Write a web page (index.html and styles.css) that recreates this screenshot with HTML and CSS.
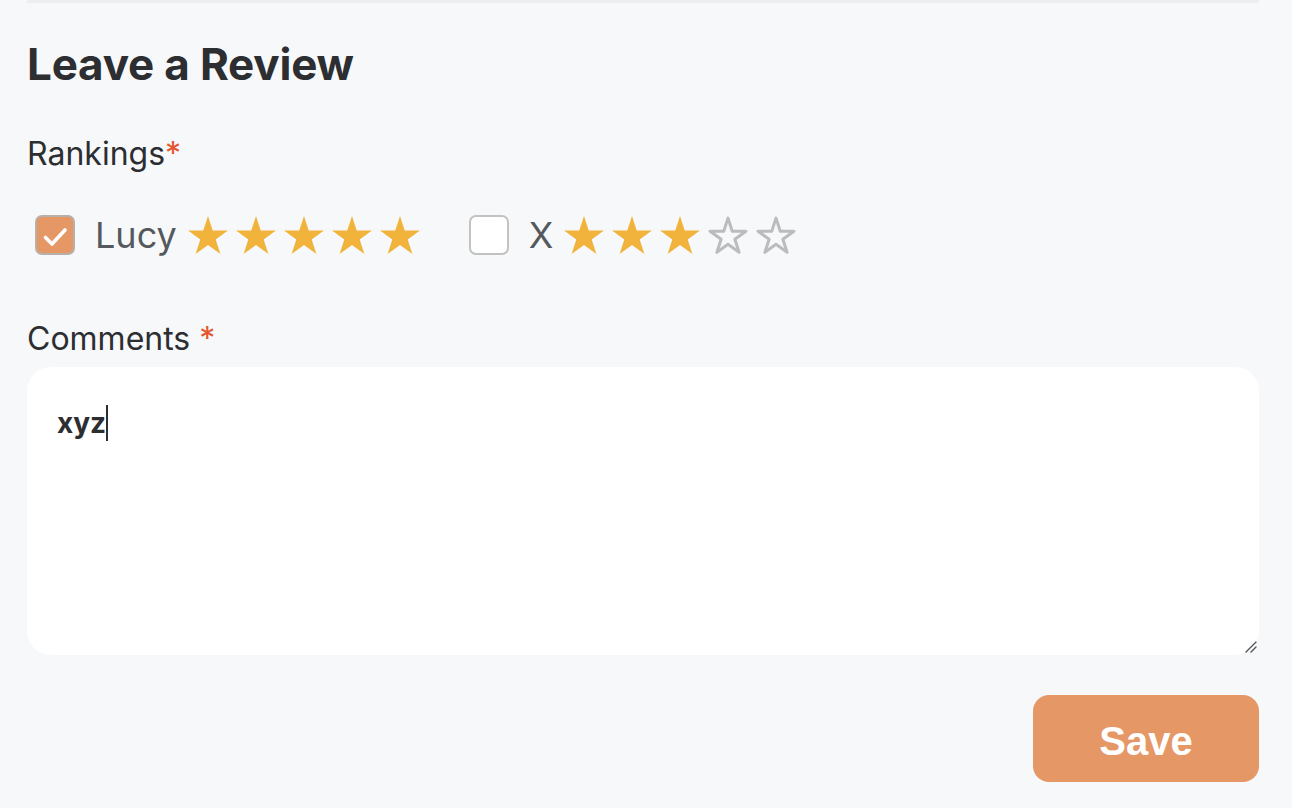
FILE: index.html
```html
<!DOCTYPE html>
<html>
<head>
<meta charset="utf-8">
<link rel="stylesheet" href="styles.css">
</head>
<body>
<div class="page">
  <div class="topbar"></div>
  <h1 class="title">Leave a Review</h1>
  <div class="label">Rankings<span class="req">*</span></div>
  <div class="rankings">
    <div class="rank">
      <span class="box checked">
        <svg viewBox="0 0 36 36" width="36" height="36"><path d="M8.5 20.5l6.5 6.5 13-14" fill="none" stroke="#fff" stroke-width="3.6" stroke-linecap="round" stroke-linejoin="round"/></svg>
      </span>
      <span class="name">Lucy</span>
      <span class="stars">
        <svg class="star" viewBox="0 0 24 24"><path class="on" d="M12 1.64L14.57 9.56L22.9 9.56L16.17 14.45L18.74 22.37L12 17.48L5.26 22.37L7.83 14.45L1.1 9.56L9.43 9.56Z"/></svg>
        <svg class="star" viewBox="0 0 24 24"><path class="on" d="M12 1.64L14.57 9.56L22.9 9.56L16.17 14.45L18.74 22.37L12 17.48L5.26 22.37L7.83 14.45L1.1 9.56L9.43 9.56Z"/></svg>
        <svg class="star" viewBox="0 0 24 24"><path class="on" d="M12 1.64L14.57 9.56L22.9 9.56L16.17 14.45L18.74 22.37L12 17.48L5.26 22.37L7.83 14.45L1.1 9.56L9.43 9.56Z"/></svg>
        <svg class="star" viewBox="0 0 24 24"><path class="on" d="M12 1.64L14.57 9.56L22.9 9.56L16.17 14.45L18.74 22.37L12 17.48L5.26 22.37L7.83 14.45L1.1 9.56L9.43 9.56Z"/></svg>
        <svg class="star" viewBox="0 0 24 24"><path class="on" d="M12 1.64L14.57 9.56L22.9 9.56L16.17 14.45L18.74 22.37L12 17.48L5.26 22.37L7.83 14.45L1.1 9.56L9.43 9.56Z"/></svg>
      </span>
    </div>
    <div class="rank">
      <span class="box"></span>
      <span class="name">X</span>
      <span class="stars">
        <svg class="star" viewBox="0 0 24 24"><path class="on" d="M12 1.64L14.57 9.56L22.9 9.56L16.17 14.45L18.74 22.37L12 17.48L5.26 22.37L7.83 14.45L1.1 9.56L9.43 9.56Z"/></svg>
        <svg class="star" viewBox="0 0 24 24"><path class="on" d="M12 1.64L14.57 9.56L22.9 9.56L16.17 14.45L18.74 22.37L12 17.48L5.26 22.37L7.83 14.45L1.1 9.56L9.43 9.56Z"/></svg>
        <svg class="star" viewBox="0 0 24 24"><path class="on" d="M12 1.64L14.57 9.56L22.9 9.56L16.17 14.45L18.74 22.37L12 17.48L5.26 22.37L7.83 14.45L1.1 9.56L9.43 9.56Z"/></svg>
        <svg class="star" viewBox="0 0 24 24"><path class="off" d="M12 2.8L14.32 9.91L21.8 9.92L15.75 14.32L18.05 21.43L12 17.04L5.95 21.43L8.25 14.32L2.2 9.92L9.68 9.91Z"/></svg>
        <svg class="star" viewBox="0 0 24 24"><path class="off" d="M12 2.8L14.32 9.91L21.8 9.92L15.75 14.32L18.05 21.43L12 17.04L5.95 21.43L8.25 14.32L2.2 9.92L9.68 9.91Z"/></svg>
      </span>
    </div>
  </div>
  <div class="label comments-label">Comments <span class="req">*</span></div>
  <div class="textarea">
    <span class="typed">xyz</span><span class="caret"></span>
    <svg class="grip" viewBox="0 0 12 12" width="12" height="12"><path d="M1 11L11 1M6 11l5-5" stroke="#555" stroke-width="1.4" stroke-linecap="round"/></svg>
  </div>
  <div class="actions">
    <button class="save">Save</button>
  </div>
</div>
</body>
</html>
```

FILE: styles.css
```css
html, body {
  margin: 0;
  padding: 0;
  background: #f7f8fa;
}
body {
  font-family: Inter, "Liberation Sans", sans-serif;
  color: #2c2e31;
}
.page {
  margin: 0 33px 0 27px;
  display: flex;
  flex-direction: column;
}
.topbar {
  height: 3px;
  background: #eceef1;
}
.title {
  margin: 35px 0 0 0;
  font-size: 44px;
  line-height: 52px;
  font-weight: 700;
  letter-spacing: -0.2px;
  color: #2c2e31;
}
.label {
  font-size: 32px;
  line-height: 40px;
  color: #2c2e31;
  margin-top: 44px;
}
.req {
  color: #e4572e;
}
.rankings {
  display: flex;
  gap: 47px;
  margin-top: 39px;
  padding-left: 8px;
}
.rank {
  display: flex;
  align-items: center;
}
.box {
  width: 36px;
  height: 36px;
  border: 2px solid #c2c2c2;
  border-radius: 7px;
  background: #fff;
  display: flex;
  align-items: center;
  justify-content: center;
}
.box.checked {
  background: #e59866;
  border-color: #b8b0a8;
}
.name {
  font-size: 36px;
  color: #55585c;
  margin-left: 20px;
  margin-right: 9px;
  line-height: 40px;
}
.stars {
  display: flex;
  align-items: center;
  gap: 4px;
}
.star {
  width: 44px;
  height: 44px;
}
.on {
  fill: #f2b33d;
}
.off {
  fill: none;
  stroke: #bcbcbc;
  stroke-width: 1.65;
  stroke-linejoin: round;
}
.comments-label {
  margin-top: 62px;
}
.textarea {
  position: relative;
  margin-top: 8px;
  height: 288px;
  background: #fff;
  border-radius: 24px;
  padding: 36px 30px;
  box-sizing: border-box;
  display: flex;
  align-items: flex-start;
}
.typed {
  font-size: 28px;
  line-height: 40px;
  font-weight: 700;
  color: #2c2e31;
}
.caret {
  width: 2px;
  height: 36px;
  margin-top: 2px;
  background: #2c2e31;
}
.grip {
  position: absolute;
  right: 2px;
  bottom: 2px;
}
.actions {
  display: flex;
  justify-content: flex-end;
  margin-top: 40px;
}
.save {
  width: 226px;
  height: 87px;
  padding: 6px 0 0 0;
  border: none;
  border-radius: 16px;
  background: #e59866;
  color: #fff;
  font-family: "Liberation Sans", Arial, sans-serif;
  font-weight: 700;
  font-size: 40px;
}
```
